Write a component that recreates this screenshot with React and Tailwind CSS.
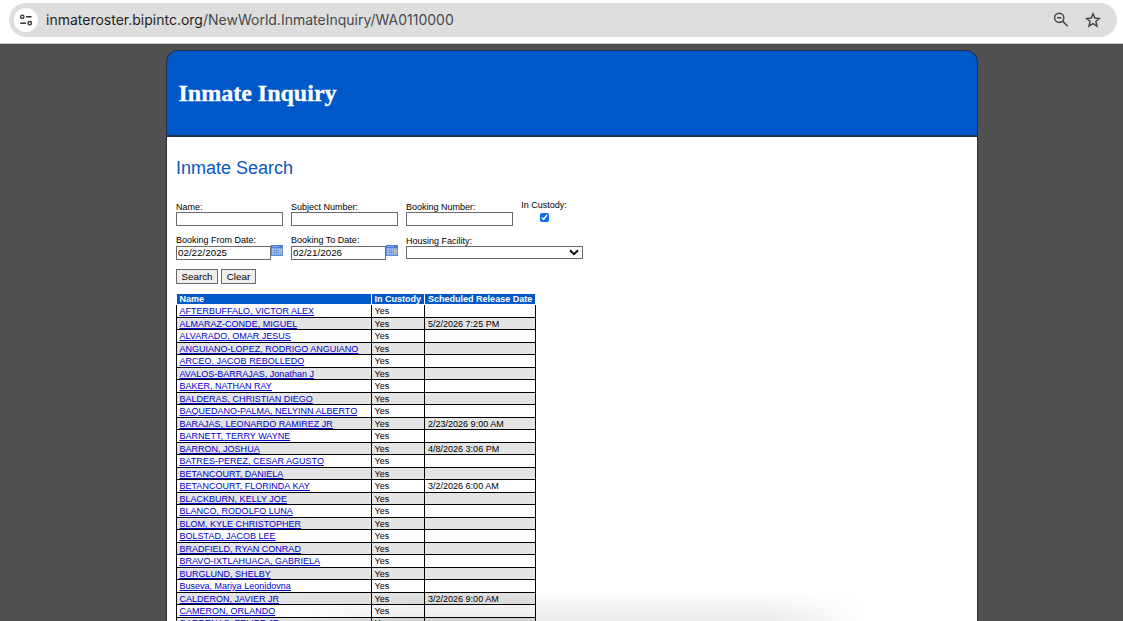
import React, { useState } from "react";

const inmates = [
  { name: "AFTERBUFFALO, VICTOR ALEX", release: "" },
  { name: "ALMARAZ-CONDE, MIGUEL", release: "5/2/2026 7:25 PM" },
  { name: "ALVARADO, OMAR JESUS", release: "" },
  { name: "ANGUIANO-LOPEZ, RODRIGO ANGUIANO", release: "" },
  { name: "ARCEO, JACOB REBOLLEDO", release: "" },
  { name: "AVALOS-BARRAJAS, Jonathan J", release: "" },
  { name: "BAKER, NATHAN RAY", release: "" },
  { name: "BALDERAS, CHRISTIAN DIEGO", release: "" },
  { name: "BAQUEDANO-PALMA, NELYINN ALBERTO", release: "" },
  { name: "BARAJAS, LEONARDO RAMIREZ JR", release: "2/23/2026 9:00 AM" },
  { name: "BARNETT, TERRY WAYNE", release: "" },
  { name: "BARRON, JOSHUA", release: "4/8/2026 3:06 PM" },
  { name: "BATRES-PEREZ, CESAR AGUSTO", release: "" },
  { name: "BETANCOURT, DANIELA", release: "" },
  { name: "BETANCOURT, FLORINDA KAY", release: "3/2/2026 6:00 AM" },
  { name: "BLACKBURN, KELLY JOE", release: "" },
  { name: "BLANCO, RODOLFO LUNA", release: "" },
  { name: "BLOM, KYLE CHRISTOPHER", release: "" },
  { name: "BOLSTAD, JACOB LEE", release: "" },
  { name: "BRADFIELD, RYAN CONRAD", release: "" },
  { name: "BRAVO-IXTLAHUACA, GABRIELA", release: "" },
  { name: "BURGLUND, SHELBY", release: "" },
  { name: "Buseva, Mariya Leonidovna", release: "" },
  { name: "CALDERON, JAVIER JR", release: "3/2/2026 9:00 AM" },
  { name: "CAMERON, ORLANDO", release: "" },
  { name: "CARDENAS, FELIPE JR", release: "" },
];

const TextField = ({ label, value = "", labelClass = "h-[10px]", className = "w-[107px]" }) => (
  <label className="block">
    <span className={`block leading-[11px] whitespace-nowrap ${labelClass}`}>{label}</span>
    <input
      defaultValue={value}
      className={`block h-[14px] border border-[#6b6b6b] bg-white px-px pb-[2px] text-[9.8px] leading-[10px] outline-none ${className}`}
    />
  </label>
);

const CalendarIcon = () => (
  <svg width="12" height="11" viewBox="0 0 12 11" className="block">
    <rect width="12" height="11" fill="#5f8fdc" />
    <rect width="12" height="3" fill="#4a7cd3" />
    <path d="M1 1.5h7" stroke="#7fa9ea" />
    <path d="M1 3.5h10v6H1z" fill="#b9d0f5" />
    <path d="M3.5 3.5v6M5.5 3.5v6M7.5 3.5v6M9.5 3.5v6M1 5.5h10M1 7.5h10" stroke="#6592dc" strokeWidth=".8" />
    <rect x="8" y="5" width="2.5" height="2.5" fill="#e5bd8c" />
  </svg>
);

const AddressBar = () => (
  <div className="h-[43px] bg-white px-[9px] pt-[3px]">
    <div className="flex h-[34px] w-[1108px] items-center rounded-full bg-[#dedede] pl-[5px] pr-4 text-[#47484a]">
      <div className="flex h-6 w-6 items-center justify-center rounded-full bg-white">
        <svg width="14" height="14" viewBox="0 0 14 14" fill="none" stroke="#333" strokeWidth="1.4">
          <circle cx="3.3" cy="3.8" r="1.7" />
          <path d="M7 3.8h5.6M1.4 10.2H7" />
          <circle cx="10.7" cy="10.2" r="1.7" />
        </svg>
      </div>
      <div className="ml-2 flex-1 whitespace-nowrap font-['Inter',sans-serif] text-[14px] leading-5">
        <span className="text-[#1f1f1f]">inmateroster.bipintc.org</span>
        /NewWorld.InmateInquiry/WA0110000
      </div>
      <svg width="16" height="16" viewBox="0 0 16 16" fill="none" stroke="currentColor" strokeWidth="1.5">
        <circle cx="6.2" cy="5.8" r="4.6" />
        <path d="M4 5.8h4.4M9.5 9.1l5.2 5.2" />
      </svg>
      <svg className="ml-4" width="16" height="16" viewBox="0 0 16 16" fill="none" stroke="currentColor" strokeWidth="1.5">
        <path d="M8 1.9l1.8 4.2 4.6.4-3.5 3 1.1 4.6L8 11.7l-4 2.4 1.1-4.6-3.5-3 4.6-.4z" />
      </svg>
    </div>
  </div>
);

const SearchForm = () => {
  const [inCustody, setInCustody] = useState(true);

  return (
    <form className="text-[9px] text-black">
      <div className="flex h-[35px] gap-2">
        <div className="pt-[2px]"><TextField label="Name:" /></div>
        <div className="pt-[2px]"><TextField label="Subject Number:" /></div>
        <div className="pt-[2px]"><TextField label="Booking Number:" /></div>
        <label className="flex w-[46px] flex-col items-center">
          <span className="block h-[11px] leading-[11px] whitespace-nowrap">In Custody:</span>
          <input
            type="checkbox"
            checked={inCustody}
            onChange={(e) => setInCustody(e.target.checked)}
            className="mt-[2px] h-[9px] w-[9px] accent-[#0b6cf5]"
          />
        </label>
      </div>
      <div className="flex h-[31px] gap-2">
        <div className="flex w-[107px]">
          <div className="w-[95px]">
            <TextField label="Booking From Date:" value="02/22/2025" labelClass="h-[11px]" className="w-[95px]" />
          </div>
          <div className="pt-[10px]"><CalendarIcon /></div>
        </div>
        <div className="flex w-[107px]">
          <div className="w-[95px]">
            <TextField label="Booking To Date:" value="02/21/2026" labelClass="h-[11px]" className="w-[95px]" />
          </div>
          <div className="pt-[10px]"><CalendarIcon /></div>
        </div>
        <div>
          <span className="block h-[11px] pt-px leading-[11px]">Housing Facility:</span>
          <div className="flex h-[13px] w-[177px] items-center justify-end border border-[#6b6b6b] bg-white pr-[3px]">
            <svg width="10" height="7" viewBox="0 0 10 7" fill="none" stroke="#111" strokeWidth="2">
              <path d="M1 1.2l4 4 4-4" />
            </svg>
          </div>
        </div>
      </div>
      <div className="mt-[3px] flex gap-[3px] text-[9.8px]">
        <button type="button" className="h-[15px] w-[42px] border border-[#6b6b6b] bg-[#efefef] leading-[13px]">
          Search
        </button>
        <button type="button" className="h-[15px] w-[35px] border border-[#6b6b6b] bg-[#efefef] leading-[13px]">
          Clear
        </button>
      </div>
    </form>
  );
};

const InmateTable = () => (
  <div className="mt-[10px] w-[360px] text-[9.02px] whitespace-nowrap">
    <div className="mb-px ml-px flex h-[10px] w-[358px] bg-[#0058c8] font-bold leading-[10px] text-white">
      <div className="w-[194px] pl-[2.5px]">Name</div>
      <div className="w-[53px] border-l border-white pl-[2.5px]">In Custody</div>
      <div className="flex-1 border-l border-white pl-[3px]">Scheduled Release Date</div>
    </div>
    {inmates.map((inmate, i) => (
      <div
        key={inmate.name}
        className={`flex border-b border-l border-black ${i % 2 ? "h-[12px] bg-[#e4e4e4]" : "h-[13px] bg-white"} ${
          i === inmates.length - 1 ? "leading-[10px]" : "leading-[12px]"
        }`}
      >
        <div className="w-[195px] border-r border-black pl-[2.5px]">
          <a href="#" className="block text-[#0000cd] underline">{inmate.name}</a>
        </div>
        <div className="w-[53px] border-r border-black pl-[2.5px]">Yes</div>
        <div className="w-[111px] border-r border-black pl-[3px]">{inmate.release}</div>
      </div>
    ))}
  </div>
);

const App = () => {
  return (
    <div className="relative h-[621px] w-[1123px] overflow-hidden bg-[#505050] font-['Liberation_Sans',Arial,sans-serif]">
      <AddressBar />
      <div className="h-px bg-[#c4c4c4]" />
      <div className="mt-[6px] ml-[166px] w-[812px]">
        <header className="flex h-[87px] items-center rounded-t-[12px] border border-b-2 border-[#1f3048] bg-[#0058c8] pl-[11.5px]">
          <h1 className="font-['Liberation_Serif',serif] text-[24px] leading-[36px] font-bold text-white [-webkit-text-stroke:0.3px_white]">
            Inmate Inquiry
          </h1>
        </header>
        <main className="h-[600px] border-x border-[#303438] bg-white pl-[9px] pt-[20px]">
          <h2 className="mb-[21px] h-[22px] text-[18px] leading-[22px] text-[#0b57bd]">Inmate Search</h2>
          <SearchForm />
          <InmateTable />
        </main>
      </div>
      {/* Soft shadow rising from the bottom edge */}
      <div className="pointer-events-none absolute bottom-0 left-[290px] h-[32px] w-[580px] bg-linear-to-t from-black/8 to-transparent [mask-image:linear-gradient(to_right,transparent,black_20%,black_82%,transparent)]" />
    </div>
  );
};

export default App;
